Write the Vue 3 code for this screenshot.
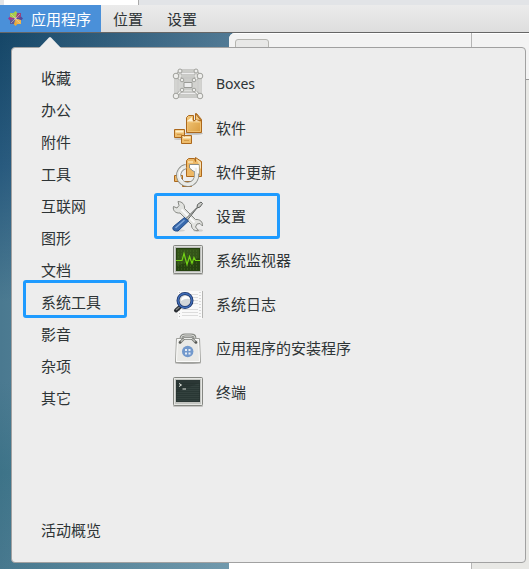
<template>
  <div class="screen">
    <div class="tab-strip"><div class="tab"></div></div>

    <header class="top-bar">
      <button class="top-item active" type="button">
        <svg class="logo" viewBox="0 0 15 15">
          <path d="M3 3h9v9H3z" fill="#c5b6a8" />
          <path d="M7.5 0l2 2-2 5-2-5z" fill="#a8cf45" />
          <path d="M15 7.5l-2 2-5-2 5-2z" fill="#4f4a9c" />
          <path d="M7.5 15l-2-2 2-5 2 5z" fill="#e8a93c" />
          <path d="M0 7.5l2-2 5 2-5 2z" fill="#a0378c" />
          <path d="M2 2h4l1 4-1 1-4-1z" fill="#a9cc4c" />
          <path d="M9 2h4v4l-4 1-1-1z" fill="#96447f" />
          <path d="M2 9l4-1 1 1-1 4H2z" fill="#5b5a99" />
          <path d="M9 8l4 1v4H9L8 9z" fill="#eeb54c" />
          <path d="M3 3l9 9M12 3l-9 9" stroke="#e6d6c4" stroke-width="0.5" />
        </svg>
        应用程序
      </button>
      <button class="top-item" type="button">位置</button>
      <button class="top-item" type="button">设置</button>
    </header>

    <main class="desktop">
      <div class="window">
        <div class="window-head">
          <div class="head-left"><span class="head-button"></span></div>
          <div class="head-right"></div>
        </div>
        <div class="window-body">
          <div class="body-left"></div>
          <div class="body-right"></div>
        </div>
      </div>

      <div class="menu">
        <svg class="pointer" viewBox="0 0 24 13">
          <path d="M0 13L11 1.5Q12 .5 13 1.5L24 13z" fill="#ededed" />
        </svg>
        <nav class="categories">
          <button
            v-for="category in categories"
            :key="category"
            class="category"
            :class="{ marked: category === currentCategory }"
            type="button"
            @click="currentCategory = category"
          >
            {{ category }}
          </button>
          <button class="category overview" type="button">活动概览</button>
        </nav>

        <div class="apps">
          <button
            v-for="app in apps"
            :key="app.id"
            class="app"
            :class="{ marked: app.id === currentApp, latin: app.id === 'boxes' }"
            type="button"
            @click="currentApp = app.id"
          >
            <svg v-if="app.id === 'boxes'" class="icon" viewBox="0 0 32 32" fill="none">
              <g stroke="#a3a49f" stroke-width="2.8">
                <path d="M8 3h16M4 8h24v20H4zM4 8l4-5M28 8l-4-5M8 4v19h16V4" />
                <path d="M10 12h12v10H10zM4 28l6-6M28 28l-6-6M4 8l6 4M28 8l-6 4" />
              </g>
              <g stroke="#f4f4f2" stroke-width="1.2">
                <path d="M8 3h16M4 8h24v20H4zM4 8l4-5M28 8l-4-5M8 4v19h16V4" />
                <path d="M10 12h12v10H10zM4 28l6-6M28 28l-6-6M4 8l6 4M28 8l-6 4" />
              </g>
              <path d="M12 14.500h8v5h-8z" stroke="#9b9c97" />
              <g fill="#eeeeec" stroke="#a0a19c">
                <circle cx="4" cy="8" r="2.8" /><circle cx="28" cy="8" r="2.8" />
                <circle cx="4" cy="28" r="2.8" /><circle cx="28" cy="28" r="2.8" />
                <circle cx="8" cy="3" r="2" /><circle cx="24" cy="3" r="2" />
                <circle cx="10" cy="12" r="1.8" /><circle cx="22" cy="12" r="1.8" />
                <circle cx="10" cy="22" r="1.8" /><circle cx="22" cy="22" r="1.8" />
              </g>
            </svg>

            <svg v-else-if="app.id === 'software'" class="icon" viewBox="0 0 32 32">
              <defs>
                <linearGradient id="carton" x2="1" y2="1">
                  <stop stop-color="#f5cd83" />
                  <stop offset="1" stop-color="#d99a3c" />
                </linearGradient>
              </defs>
              <ellipse cx="22" cy="21.500" rx="9" ry="1.300" fill="#bdbdbb" />
              <ellipse cx="8" cy="27" rx="6" ry="1" fill="#c5c5c3" />
              <g stroke="#ac681c" stroke-linejoin="round">
                <path d="M14.500 5.500l2-2h5v6l3-3V1.500l5 6v13h-15z" fill="url(#carton)" />
                <path d="M23.500 8V1.500l5.500 7z" fill="#f3c980" />
                <path d="M2.500 17.500h10v8h-10zM9.500 23.500h10v8h-10z" fill="#edbc6c" />
              </g>
              <path d="M15 9l5-4v3l3 2 1-2 4 1.500H15z" fill="#fff1d4" />
              <path d="M15.500 10.500h13v9h-13z" fill="none" stroke="#f0c172" />
              <path d="M3.500 19.500h8M10.500 25.500h8" stroke="#fff0c8" stroke-width="2" />
              <path d="M5 22.500h5M12 28.500h5" stroke="#d49b46" />
            </svg>

            <svg v-else-if="app.id === 'update'" class="icon" viewBox="0 0 32 32">
              <g stroke="#ac681c" fill="#edb866" stroke-linejoin="round">
                <path d="M14.500 4.500l2-2h6l1 3V1.500l6 4v15h-15z" />
                <path d="M2.500 19.500h8v6h-8zM10.500 25.500h9v5h-9z" />
              </g>
              <path d="M24.500 3.500l4 3v6" fill="#f8d798" stroke="#f7e4bd" />
              <path d="M16 5h5v2h-5z" fill="#f7d89f" />
              <path d="M14 10.500A9 9 0 1 0 24.500 18V15" fill="none" stroke="#8b8d88" stroke-width="5" />
              <path d="M17.500 8.500h9.500v10.500l-3-3-3-1-3.500-3z" fill="#fafafa" stroke="#8b8d88" />
              <path d="M14 10.500A9 9 0 1 0 24.500 18V12" fill="none" stroke="#e9eae7" stroke-width="3.400" />
              <path d="M10 12.500a8.500 8.500 0 0 0 1 13" fill="none" stroke="#fff" />
              <path d="M18 10h8v7" fill="none" stroke="#fff" stroke-width="1.500" />
            </svg>

            <svg v-else-if="app.id === 'settings'" class="icon" viewBox="0 0 32 32">
              <ellipse cx="7" cy="30.500" rx="6" ry="1.200" fill="#d0d0ce" />
              <ellipse cx="26" cy="30.500" rx="5" ry="1.200" fill="#d0d0ce" />
              <path
                d="M6 1.500l1 4-2 2.500-3.500-1.500c-1 4 2 7 6.500 6.500L19.500 24.500c-.500 4 3 7 7 6l-3-3.500 1.500-3 3-.500 2.500 2.500c.500-4-2.500-7-7-6.500L12.500 8.500c.500-4-2.500-7-6.500-7z"
                fill="#e2e3e0" stroke="#858782" stroke-linejoin="round"
              />
              <path d="M9.500 9.500l13 13" stroke="#fafafa" stroke-width="2" />
              <path d="M14 18.500L25 7.500l.500-3 3.500-2.500 1.500 1.500-2.500 3.500-3 1L15.500 20z" fill="#c9cac7" stroke="#5f6260" />
              <path d="M12.500 17.500l4 3.500L6 31q-3 .500-5-1.500-.500-2 .500-3z" fill="#3869ad" stroke="#204a87" />
              <path d="M12.500 20l-9 8" stroke="#7fa6d8" stroke-width="1.500" />
            </svg>

            <svg v-else-if="app.id === 'monitor'" class="icon" viewBox="0 0 32 32">
              <rect x="1" y="29" width="30" height="2" rx="1" fill="#c4c4c2" />
              <rect x="1.500" y="1.500" width="29" height="28" rx="1" fill="#b9bbb7" stroke="#858782" />
              <rect x="2.500" y="2.500" width="27" height="26" fill="none" stroke="#dcddda" />
              <rect x="4" y="4" width="24" height="23" fill="#25420f" />
              <path d="M5 5h22v9L5 22z" fill="#345419" />
              <path
                d="M6 7h21M6 10h21M6 13h21M6 19h21M6 22h21M6 25h21"
                stroke="#4e7d29" stroke-dasharray="1 2" stroke-width="0.700"
              />
              <path
                d="M4 16.500h6l2-7 3 11 2.500-8 2.500 7 2-6 1.500 3H28"
                fill="none" stroke="#73d216" stroke-width="1.200"
              />
            </svg>

            <svg v-else-if="app.id === 'logs'" class="icon" viewBox="0 0 32 32">
              <path d="M6 3h24v28H6z" fill="#f9f9f9" />
              <path d="M30.500 3v27" stroke="#b5b5b3" />
              <path d="M7.500 4v26M28 4v26" stroke="#bbb" stroke-dasharray="1 2" />
              <path
                d="M16 6.500h10M20 9.500h6M20 12.500h6M20 15.500h6M10 21.500h16M10 24.500h16M10 27.500h16"
                stroke="#dcdcdc"
              />
              <path d="M9 18l-5 4.500" stroke="#272b30" stroke-width="4" stroke-linecap="round" />
              <path d="M7.500 19L4 22" stroke="#858987" stroke-width="1.200" />
              <circle cx="13" cy="12.500" r="7" fill="#d3d7d9" stroke="#1c3569" stroke-width="3" />
              <circle cx="13" cy="12.500" r="7" fill="none" stroke="#416fba" stroke-width="1.400" />
              <path d="M9 13q0-5 5-5 3 0 4 3-5-1-9 2" fill="#fff" />
            </svg>

            <svg v-else-if="app.id === 'installer'" class="icon" viewBox="0 0 32 32">
              <ellipse cx="16" cy="31" rx="13" ry="1" fill="#a9a9a7" />
              <path d="M9 9V6q0-3 4-3h6q4 0 4 3v3" fill="none" stroke="#868883" stroke-width="2.800" />
              <path d="M9 9V6q0-3 4-3h6q4 0 4 3v3" fill="none" stroke="#dfe0dc" />
              <path d="M4.500 6.500h23l1 24h-25z" fill="#e9e9e6" stroke="#a0a19d" stroke-linejoin="round" />
              <path d="M5.500 7.500h21l1 22h-23z" fill="none" stroke="#fbfbfa" />
              <path d="M8 10.500L12 6.500h8l4 4" fill="none" stroke="#777974" stroke-width="2.600" />
              <path d="M8 10.500L12 6.500h8l4 4" fill="none" stroke="#e9eae7" />
              <circle cx="8" cy="10.500" r="1.300" fill="#555753" />
              <circle cx="24" cy="10.500" r="1.300" fill="#555753" />
              <circle cx="15.700" cy="19.500" r="5.700" fill="#7299cc" />
              <path
                d="M13 17h2v2h-2zM16.500 17h2v2h-2zM13 20.500h2v2h-2zM16.500 20.500h2v2h-2z"
                fill="#e6edf5"
              />
            </svg>

            <svg v-else class="icon" viewBox="0 0 32 32">
              <rect x="1" y="29" width="30" height="2" rx="1" fill="#c4c4c2" />
              <rect x="1.500" y="1.500" width="29" height="28" rx="1" fill="#c3c5c1" stroke="#858782" />
              <rect x="2.500" y="2.500" width="27" height="26" fill="none" stroke="#e5e6e3" />
              <rect x="4" y="4" width="24" height="22" fill="#2b3735" />
              <path d="M5 16l22-9v18H5z" fill="#33413e" />
              <path
                d="M4 7.500h24M4 9.500h24M4 11.500h24M4 13.500h24M4 15.500h24M4 17.500h24M4 19.500h24M4 21.500h24M4 23.500h24"
                stroke="#24302e" stroke-width="0.600"
              />
              <path d="M7 7.500l2.500 1.500L7 10.500M10.500 13h3.500" fill="none" stroke="#e1e5df" />
            </svg>
            {{ app.name }}
          </button>
        </div>
      </div>
    </main>
  </div>
</template>

<script setup>
import { ref } from 'vue';

const categories = ['收藏', '办公', '附件', '工具', '互联网', '图形', '文档', '系统工具', '影音', '杂项', '其它'];

const apps = [
  { id: 'boxes', name: 'Boxes' },
  { id: 'software', name: '软件' },
  { id: 'update', name: '软件更新' },
  { id: 'settings', name: '设置' },
  { id: 'monitor', name: '系统监视器' },
  { id: 'logs', name: '系统日志' },
  { id: 'installer', name: '应用程序的安装程序' },
  { id: 'terminal', name: '终端' }
];

const currentCategory = ref('系统工具');
const currentApp = ref('settings');
</script>

<style>
body {
  margin: 0;
}
</style>

<style scoped>
.screen {
  display: flex;
  flex-direction: column;
  min-height: 100vh;
  font-family: "Noto Sans", "Noto Sans CJK SC", sans-serif;
  font-size: 15px;
  color: #2e3436;
}

button {
  display: flex;
  align-items: center;
  box-sizing: border-box;
  margin: 0;
  border: 0;
  background: none;
  font: inherit;
  line-height: 20px;
  color: inherit;
  white-space: nowrap;
  cursor: pointer;
}

.tab-strip {
  height: 5px;
  padding-left: 4px;
  background: #e2e4e7;
}

.tab {
  width: 134px;
  height: 5px;
  border-right: 1px solid #aaa;
  background: #fff;
}

.top-bar {
  display: flex;
  height: 27px;
  border-bottom: 1px solid #666;
  background: linear-gradient(#ebebeb, #dedede);
}

.top-item {
  padding: 0 12px;
}

.top-item.active {
  gap: 8px;
  padding: 0 10px 0 8px;
  background: #4a90d9;
  color: #fff;
}

.logo {
  width: 15px;
  height: 15px;
}

.desktop {
  position: relative;
  display: flex;
  flex: 1;
  padding: 14px 3px 6px 11px;
  overflow: hidden;
  background: linear-gradient(to right, transparent, rgba(190, 215, 230, 0.35) 229px),
    linear-gradient(#154667, #285a7e 25%, #4a7990 50%, #4a7990 65%, #3d7388 82%, #47788e);
}

/* window behind the menu */
.window {
  position: absolute;
  inset: 0 0 0 229px;
  display: flex;
  flex-direction: column;
  border-radius: 6px 0 0 0;
  overflow: hidden;
  background: #fff;
}

.window-head {
  display: flex;
  height: 46px;
  border-bottom: 1px solid #999;
  background: #f3f3f3;
  box-shadow: inset 0 1px #fff;
}

.head-left,
.body-left {
  box-sizing: border-box;
  width: 243px;
  border-right: 1px solid #b5b5b5;
}

.head-left {
  padding: 6px;
}

.head-button {
  display: block;
  box-sizing: border-box;
  width: 34px;
  height: 32px;
  border: 1px solid #b5b5b0;
  border-radius: 3px;
  background: #e8e8e7;
}

.window-body {
  display: flex;
  flex: 1;
}

.body-right {
  flex: 1;
  background: #e8e8e5;
}

.menu {
  position: relative;
  display: flex;
  flex: 1;
  gap: 27px;
  padding: 14px 11px 16px;
  border: 1px solid #a1a1a1;
  border-radius: 4px;
  background: #ededed;
}

.pointer {
  position: absolute;
  top: -12px;
  left: 26px;
  width: 24px;
  height: 13px;
}

.categories {
  display: flex;
  flex-direction: column;
  width: 104px;
}

.category {
  position: relative;
  height: 32px;
  padding: 0 18px;
}

.overview {
  margin-top: auto;
}

.apps {
  display: flex;
  flex-direction: column;
  align-items: flex-start;
}

.app {
  position: relative;
  gap: 12px;
  height: 44px;
  padding: 0 34px 0 18px;
}

.app.latin {
  font-size: 14px;
}

.icon {
  width: 32px;
  height: 32px;
}

.marked::after {
  content: "";
  position: absolute;
  inset: -1px 0;
  border: 3px solid #1e9bff;
  border-radius: 3px;
}

.category.marked::after {
  inset: -6px 0 0;
}
</style>
